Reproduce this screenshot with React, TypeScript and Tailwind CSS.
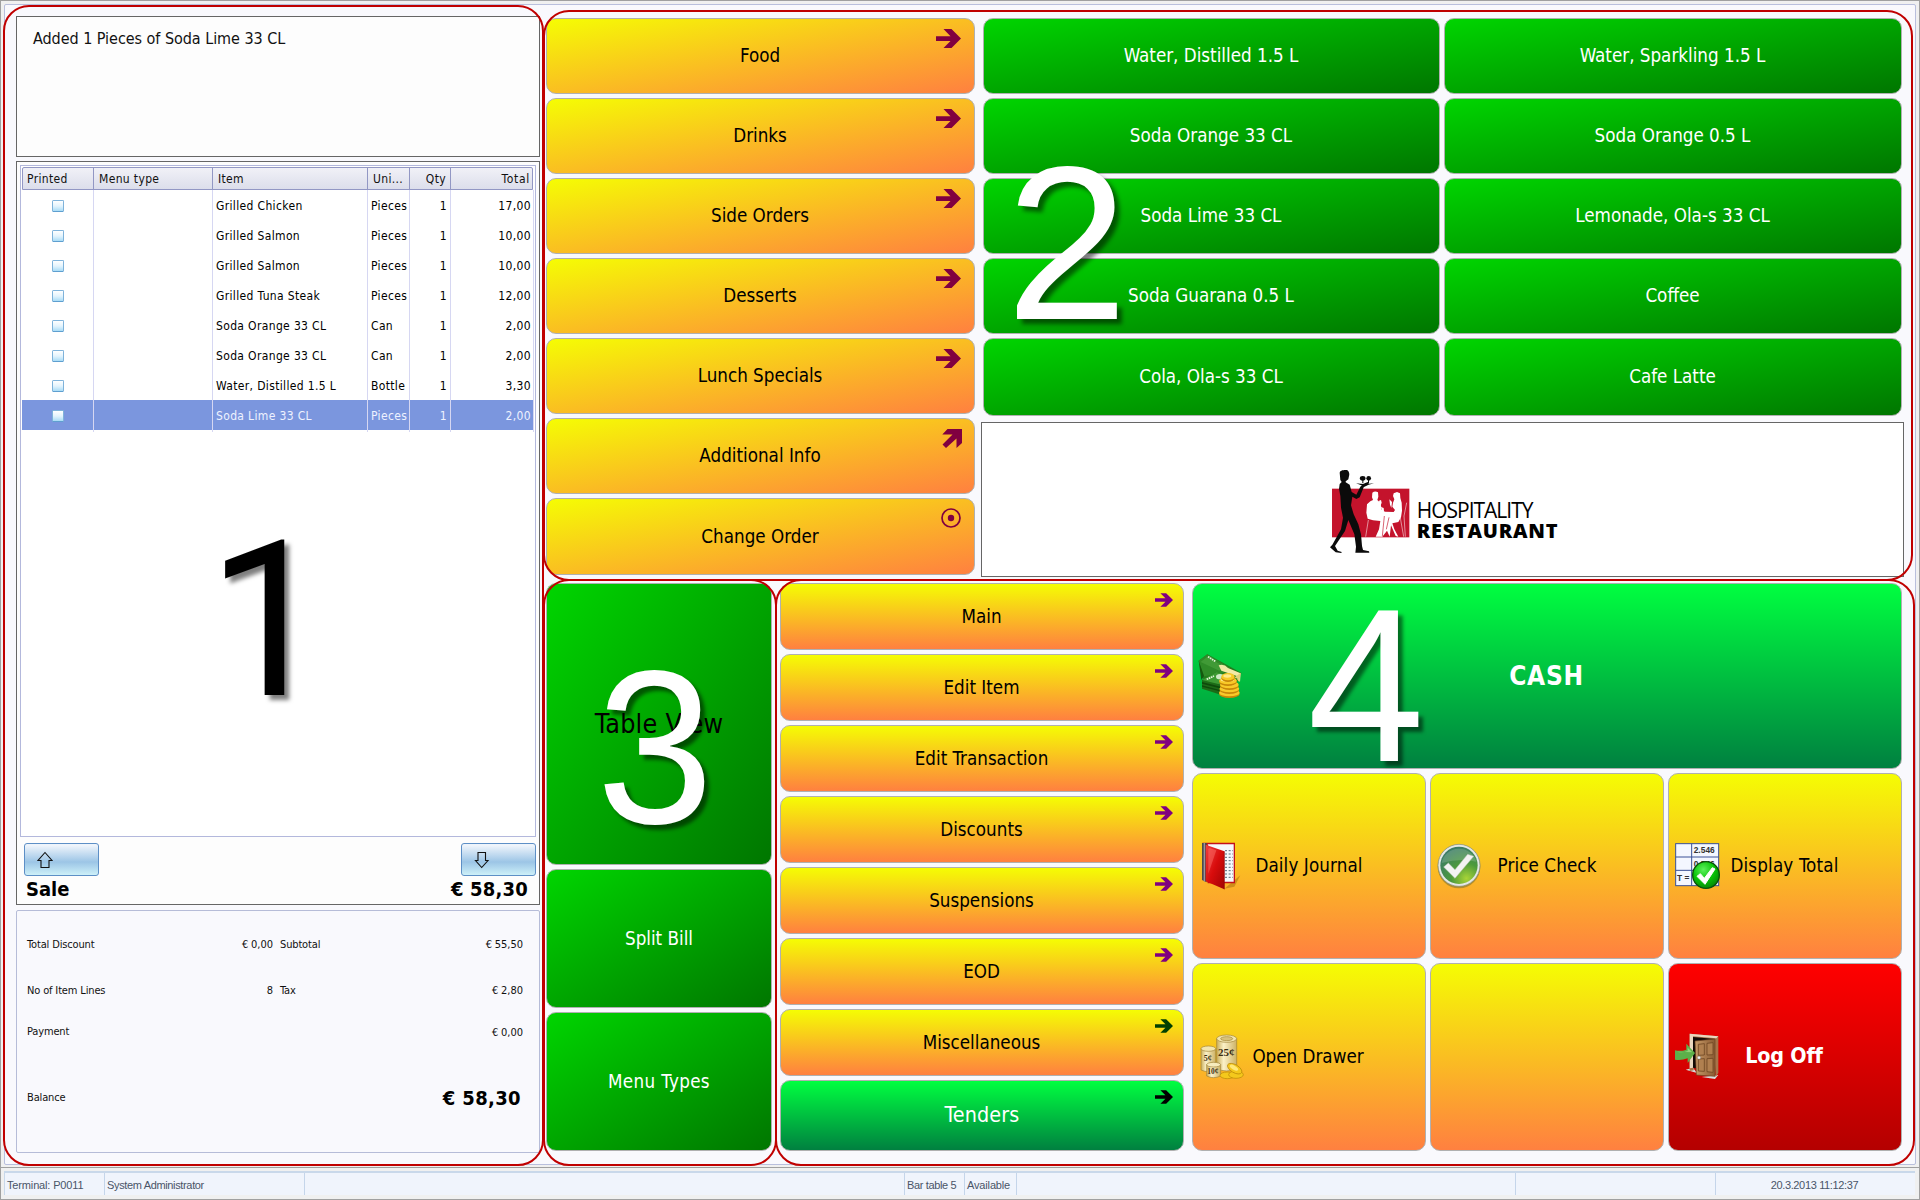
import type { ReactNode } from "react";

type Line = { item: string; unit: string; total: string; selected?: boolean };

const LINES: Line[] = [
  { item: "Grilled Chicken", unit: "Pieces", total: "17,00" },
  { item: "Grilled Salmon", unit: "Pieces", total: "10,00" },
  { item: "Grilled Salmon", unit: "Pieces", total: "10,00" },
  { item: "Grilled Tuna Steak", unit: "Pieces", total: "12,00" },
  { item: "Soda Orange 33 CL", unit: "Can", total: "2,00" },
  { item: "Soda Orange 33 CL", unit: "Can", total: "2,00" },
  { item: "Water, Distilled 1.5 L", unit: "Bottle", total: "3,30" },
  { item: "Soda Lime 33 CL", unit: "Pieces", total: "2,00", selected: true },
];

const CATEGORIES = ["Food", "Drinks", "Side Orders", "Desserts", "Lunch Specials", "Additional Info", "Change Order"];

const PRODUCTS = [
  "Water, Distilled 1.5 L",
  "Water, Sparkling 1.5 L",
  "Soda Orange 33 CL",
  "Soda Orange 0.5 L",
  "Soda Lime 33 CL",
  "Lemonade, Ola-s 33 CL",
  "Soda Guarana 0.5 L",
  "Coffee",
  "Cola, Ola-s 33 CL",
  "Cafe Latte",
];

const MENUS = ["Main", "Edit Item", "Edit Transaction", "Discounts", "Suspensions", "EOD", "Miscellaneous"];

const TILE = "relative flex items-center justify-center rounded-[10px] border border-[#b0b0b0] text-[18.67px] leading-none";
const AMBER_DIAGONAL = "bg-linear-to-br/srgb from-[#f5fd03] to-[#ff8040] text-black";
const AMBER = "bg-linear-to-b/srgb from-[#f5fd03] to-[#ff8040] text-black";
const GREEN = "bg-linear-to-br/srgb from-[#00d500] to-[#007600] text-white";
const BRIGHT = "bg-linear-to-b/srgb from-[#00ff40] to-[#008040] text-white";
const RED = "bg-linear-to-b/srgb from-[#ff0000] to-[#b40000] text-white";

function Tile({ look, className = "", children }: { look: string; className?: string; children?: ReactNode }) {
  return <button className={`${TILE} ${look} ${className}`}>{children}</button>;
}

function ArrowRight({ className }: { className: string }) {
  return (
    <svg viewBox="0 0 25 19" className={className} fill="currentColor">
      <path d="M7.5 0h8L25 9.5 15.5 19h-8l7-7H0V7.2h14.5z" />
    </svg>
  );
}

function CategoryMark({ name }: { name: string }) {
  if (name === "Additional Info")
    return (
      <svg viewBox="0 0 20 19" className="absolute top-[10px] right-[12px] h-[19px] w-[20px] text-[#800040]" fill="currentColor">
        <path d="M5.5 0H20v14l-5.5 5V9.5L4 19 .5 15.5l10-10H.3z" />
      </svg>
    );
  if (name === "Change Order")
    return (
      <svg viewBox="0 0 20 20" className="absolute top-[9px] right-[13px] h-5 w-5 text-[#800040]" fill="none">
        <circle cx="10" cy="10" r="9" stroke="currentColor" strokeWidth="1.7" />
        <circle cx="10" cy="10" r="3.2" fill="currentColor" />
      </svg>
    );
  return <ArrowRight className="absolute top-[10px] right-[13px] h-[19px] w-[25px] text-[#800040]" />;
}

function Checkbox() {
  return (
    <span className="block h-3 w-[12px] rounded-[1.5px] border border-[#7fb3da] border-b-[#5f9fd0] bg-linear-to-b from-white via-[#e4f4fd] via-50% to-[#a9dcf6]" />
  );
}

function ListPanel() {
  const cols = "grid grid-cols-[71px_119px_155px_42px_41px_83px]";
  return (
    <section className="mt-[4px] flex h-[744px] flex-col border border-[#666] bg-[#fdfdfd] px-[3px] pt-[3px]">
      <div className="h-[672px] border border-[#b3b8dc] bg-white px-px pt-px">
        <div
          className={`${cols} h-[23px] w-[511px] rounded-t-[2px] border border-[#9297c4] bg-linear-to-b from-[#f1f1f7] to-[#dcdeeb] text-[12px] leading-[22px] tracking-[0.35px] text-[#111]`}
        >
          <span className="border-r border-[#9297c4] pl-[4px]">Printed</span>
          <span className="border-r border-[#9297c4] pl-[5px]">Menu type</span>
          <span className="border-r border-[#9297c4] pl-[5px]">Item</span>
          <span className="border-r border-[#9297c4] pl-[5px]">Uni...</span>
          <span className="border-r border-[#9297c4] pr-[4px] text-right">Qty</span>
          <span className="pr-[4px] text-right tracking-[0.7px]">Total</span>
        </div>
        {LINES.map((line, i) => (
          <div
            key={i}
            className={`${cols} h-[30px] w-[511px] pl-px text-[12px] leading-[32px] tracking-[0.35px] ${line.selected ? "bg-[#7b96de] text-[#eef2ff]" : "text-black"}`}
          >
            <span className="flex items-center justify-center border-r border-[#d6d7f2]">
              <Checkbox />
            </span>
            <span className="border-r border-[#d6d7f2]" />
            <span className="border-r border-[#d6d7f2] pl-[3px] whitespace-nowrap">{line.item}</span>
            <span className="overflow-hidden border-r border-[#d6d7f2] pl-[3px] whitespace-nowrap">{line.unit}</span>
            <span className="border-r border-[#d6d7f2] pr-[3px] text-right">1</span>
            <span className="border-r border-[#d6d7f2] pr-[2px] text-right">{line.total}</span>
          </div>
        ))}
      </div>
      <div className="mt-[6px] flex justify-between pl-[4px]">
        <ScrollButton up />
        <ScrollButton />
      </div>
      <div className="mt-[2px] flex justify-between pr-[8px] pl-[6px] text-[20px] leading-[23px] font-bold text-black">
        <span>Sale</span>
        <span className="tracking-[0.2px]">€ 58,30</span>
      </div>
    </section>
  );
}

function ScrollButton({ up = false }: { up?: boolean }) {
  return (
    <button className="flex h-[33px] w-[75px] items-center rounded-[3px] border border-[#5d8fc6] bg-linear-to-b from-[#eef4fb] from-5% via-[#9cc5e6] via-58% to-[#cdf0f8] pl-[12px]">
      <svg viewBox="0 0 16 18" className="h-[18px] w-4" fill="none" stroke="#111" strokeWidth="1.1">
        {up ? <path d="M8 1.5 15 9.5h-3v7H4v-7H1z" /> : <path d="M4 1.5h7.5v8H14L7.7 16.5 1.5 9.5H4z" />}
      </svg>
    </button>
  );
}

function Totals() {
  return (
    <section className="mt-[5px] h-[243px] rounded-[2px] border border-[#b6bcd8] bg-[#f9f9fd] pr-[16px] pl-[10px] text-[11px] tracking-[-0.15px] text-[#111]">
      <div className="grid grid-cols-[246px_1fr] gap-x-[7px]">
        <Amount label="Total Discount" value="€ 0,00" className="pt-[27px]" />
        <Amount label="Subtotal" value="€ 55,50" className="pt-[27px]" />
        <Amount label="No of Item Lines" value="8" className="pt-[32px]" />
        <Amount label="Tax" value="€ 2,80" className="pt-[32px]" />
        <Amount label="Payment" value="" className="pt-[27px]" />
        <Amount label="" value="€ 0,00" className="pt-[28px]" />
      </div>
      <div className="mt-[42px] flex items-center justify-between pr-[2px]">
        <span>Balance</span>
        <span className="text-[20px] leading-[32px] font-bold tracking-[0.35px] text-black">€ 58,30</span>
      </div>
    </section>
  );
}

function Amount({ label, value, className }: { label: string; value: string; className: string }) {
  return (
    <div className={`flex justify-between leading-[14px] whitespace-nowrap ${className}`}>
      <span>{label}</span>
      <span className="tracking-[0px] [word-spacing:-0.5px]">{value}</span>
    </div>
  );
}

function WaiterLogo() {
  return (
    <svg viewBox="50 50 260 270" className="h-[90px] w-[86.7px] shrink-0">
      <rect x="65" y="118" width="232" height="146" fill="#c4132c" />
      <g fill="#fff">
        <path d="M186 130Q194 124 203 129L204 142 201 152 210 160 214 182 224 187 250 188 254 182 246 172 248 160 252 150 248 140 250 132 260 128 269 132 270 146 274 160 275 184 272 204 264 218 246 222 252 240 264 262 256 260 242 228 238 262 230 244 216 262 196 262 206 240 210 215 188 213 172 208 168 190 170 165 180 156 188 152 185 144z" />
        <path d="M206 154l6-2 2 8-3 8 4 10-6-2-2-12zM214 174l6 2 1 10-8 2zM237 150l8 8-2 18-4-10z" />
        <path d="M174 212l-8 50M289 160l-8 40 4 62M270 206l10 56" fill="none" stroke="#fff" strokeWidth="1.6" />
      </g>
      <path d="M222 200l-6 60M236 204l-8 36" stroke="#c4132c" strokeWidth="2" />
      <g fill="#0b0b0b">
        <path d="M88 70C90 62 100 62 110 62 116 66 118 72 116 80L114 90 106 96 106 99 118 106 124 128 138 136 150 112 158 104 172 98 176 102 166 110 160 114 148 144 138 149 126 142 122 168 130 195 144 225 152 255 155 290 158 302 176 306 177 310 135 310 137 292 132 255 114 212 104 245 74 290 82 304 94 308 93 311 76 309 59 294 66 286 92 240 98 205 92 175 90 140 86 118 88 104 94 98 90 92z" />
        <path d="M137 102q26 4 54 0l-16 4-10 5-14-4z" />
        <ellipse cx="157" cy="87" rx="8.5" ry="7" />
        <ellipse cx="175" cy="87" rx="7" ry="7" />
        <path d="M156 92h3v9h-3zM173 92h3v9h-3z" />
      </g>
    </svg>
  );
}

function CashIcon() {
  return (
    <svg viewBox="0 0 132 132" className="absolute left-[5px] h-11 w-11">
      <path d="M2 20 28 1l70 38 32 18-8 24-44 10-60-8z" fill="#237a1c" />
      <path d="M2 20 28 1l68 40-20 16-58 10z" fill="#2f8a28" />
      <path d="M8 24 28 8l54 32-18 10z" fill="#4da53f" opacity=".6" />
      <path d="M2 20l16 46-8 12z" fill="#14580f" />
      <path d="M30 8l22 14" stroke="#e9f6e0" strokeWidth="5" strokeDasharray="5 2" />
      <path d="M62 34q16-6 28 8l38 16-2 26-10-18-46-16z" fill="#f2e9a6" />
      <path d="M128 56l-4 28-14-14z" fill="#dfd27a" />
      <path d="M12 78l44-24 62 20-4 36-46 12-56-18z" fill="#1c6b17" />
      <path d="M12 78l44-24 62 20-42 20z" fill="#3d9a34" />
      <path d="M12 84l62 16v5L12 89zM12 94l62 16v4L12 98z" fill="#0e4a0b" />
      <ellipse cx="66" cy="68" rx="12" ry="8" fill="#cfe9c6" />
      <path d="M26 76l22-10" stroke="#e9f6e0" strokeWidth="5" strokeDasharray="5 2" />
      {[0, 1, 2, 3, 4].map((i) => (
        <g key={i}>
          <ellipse cx={i > 2 ? 90 : 94} cy={120 - i * 12} rx={i > 3 ? 20 : 31 - i * 1.5} ry="12" fill="#c98707" />
          <ellipse cx={i > 2 ? 90 : 94} cy={116 - i * 12} rx={i > 3 ? 20 : 31 - i * 1.5} ry="11" fill="#f8c928" />
          <ellipse cx={i > 2 ? 88 : 91} cy={114 - i * 12} rx={i > 3 ? 12 : 20} ry="5" fill="#ffe98a" />
        </g>
      ))}
    </svg>
  );
}

function JournalIcon() {
  return (
    <svg viewBox="0 0 120 144" className="absolute left-[8px] h-12 w-10">
      <defs>
        <linearGradient id="cover" x1="0" y1="0" x2="1" y2="1">
          <stop offset="0" stopColor="#f04040" />
          <stop offset=".5" stopColor="#d80c0c" />
          <stop offset="1" stopColor="#a00404" />
        </linearGradient>
      </defs>
      <path d="M70 140l48-40-18 34z" fill="#7a4a00" opacity=".35" />
      <path d="M4 2h98v122H20z" fill="#c5101a" />
      <path d="M20 7h78v112H60z" fill="#f6f9fb" />
      {[26, 36, 46, 56, 66, 76, 86, 96, 106].map((y) => (
        <path key={y} d={`M72 ${y}h24`} stroke="#3d5568" strokeWidth="2.6" strokeDasharray="6 5" />
      ))}
      <path d="M3 3h14v118L3 114z" fill="#4a4a4e" />
      <path d="M8 3h4v116l-4-2z" fill="#96969c" />
      <path d="M14 8l56 20v114L14 118z" fill="url(#cover)" />
      <path d="M26 18l20 7-24 70V20z" fill="#ff7a70" opacity=".45" />
      <path d="M70 28v114" stroke="#8c0505" strokeWidth="2" />
    </svg>
  );
}

function PriceCheckIcon() {
  return (
    <svg viewBox="0 0 132 138" className="absolute left-[6px] h-[46px] w-11">
      <defs>
        <radialGradient id="dial" cx=".7" cy=".85" r=".9">
          <stop offset="0" stopColor="#a8d437" />
          <stop offset=".45" stopColor="#4c9a3c" />
          <stop offset="1" stopColor="#3b7a68" />
        </radialGradient>
      </defs>
      <ellipse cx="66" cy="71" rx="64" ry="65" fill="#6b6a30" opacity=".5" />
      <circle cx="66" cy="67" r="63" fill="#e4e8e4" stroke="#7d8a80" strokeWidth="2" />
      <circle cx="66" cy="67" r="56" fill="url(#dial)" />
      <path d="M14 60a53 50 0 0 1 104-4Q70 44 14 60z" fill="#fff" opacity=".16" />
      <path d="M20 72l14-12 20 20 38-46 18 6-56 66z" fill="#f3f3f3" stroke="#b9c4b9" strokeWidth="1.5" />
    </svg>
  );
}

function DisplayTotalIcon() {
  return (
    <svg viewBox="0 0 135 138" className="absolute left-[6px] h-[46px] w-[45px]">
      <defs>
        <radialGradient id="ok" cx=".4" cy=".3" r=".8">
          <stop offset="0" stopColor="#5cf05c" />
          <stop offset=".5" stopColor="#08c408" />
          <stop offset="1" stopColor="#057a05" />
        </radialGradient>
      </defs>
      <rect x="2" y="2" width="129" height="126" fill="#f4f7ff" stroke="#3a5096" strokeWidth="3" />
      <path d="M2 42h129M2 82h129M50 2v126" stroke="#3a5096" strokeWidth="3" />
      <g fontFamily="Liberation Sans, sans-serif" fontWeight="bold" fontSize="25" fill="#333">
        <text x="56" y="31">2.546</text>
        <text x="56" y="71">0.546</text>
        <text x="6" y="114">T =</text>
      </g>
      <circle cx="93" cy="96" r="40" fill="url(#ok)" stroke="#0a5208" strokeWidth="4" />
      <path d="M66 100l10-8 12 14 24-32 8 4-30 46z" fill="#fff" stroke="#fff" strokeWidth="3" />
    </svg>
  );
}

function CoinsIcon() {
  return (
    <svg viewBox="0 0 132 138" className="absolute left-[7px] h-[46px] w-11">
      <defs>
        <linearGradient id="roll">
          <stop offset="0" stopColor="#c9ae5c" />
          <stop offset=".35" stopColor="#fbf1c8" />
          <stop offset="1" stopColor="#cdb266" />
        </linearGradient>
      </defs>
      <g stroke="#a08438" strokeWidth="2">
        <path d="M50 14v90q30 14 60 0V14z" fill="url(#roll)" />
        <ellipse cx="80" cy="14" rx="30" ry="11" fill="#f3e6b0" />
        <ellipse cx="80" cy="14" rx="18" ry="6" fill="#d9c27a" />
        <path d="M3 44v64q22 10 44 0V44z" fill="url(#roll)" />
        <ellipse cx="25" cy="44" rx="22" ry="8" fill="#f3e6b0" />
        <path d="M20 92v34q20 10 42 0V92z" fill="url(#roll)" />
        <ellipse cx="41" cy="92" rx="21" ry="7" fill="#f7ecbd" />
      </g>
      <g fontFamily="Liberation Serif, serif" fontWeight="bold" fill="#3a2e12">
        <text x="54" y="65" fontSize="33">25¢</text>
        <text x="11" y="82" fontSize="24">5¢</text>
        <text x="22" y="120" fontSize="22">10¢</text>
      </g>
      <g fill="#f4c81c" stroke="#b88606" strokeWidth="2">
        <ellipse cx="82" cy="124" rx="22" ry="10" />
        <ellipse cx="108" cy="122" rx="22" ry="11" />
        <ellipse cx="104" cy="104" rx="24" ry="12" transform="rotate(30 104 104)" />
        <ellipse cx="102" cy="101" rx="14" ry="6" transform="rotate(30 102 101)" fill="#ffe878" stroke="none" />
      </g>
    </svg>
  );
}

function DoorIcon() {
  return (
    <svg viewBox="0 0 135 138" className="absolute left-[6px] h-[46px] w-[45px]">
      <defs>
        <linearGradient id="wood">
          <stop offset="0" stopColor="#c79b68" />
          <stop offset="1" stopColor="#8a5a32" />
        </linearGradient>
      </defs>
      <path d="M32 110l22-6 12 16zM80 132l50-6-10 12z" fill="#d8dcdc" />
      <path d="M44 2l86 8v110l-8 12-6-110-60-6v96l-12 2z" fill="#a87448" />
      <path d="M44 2l86 8-6 6-70-6v94l-10 2z" fill="#ead7bf" />
      <path d="M54 12l66 6v10H64v78l-10-2z" fill="#120a06" />
      <path d="M60 24l60-6v112l-56-4z" fill="url(#wood)" stroke="#6b4020" strokeWidth="2" />
      <g fill="#b08050" stroke="#704724" strokeWidth="2.5">
        <path d="M70 34l18-2v34l-18 1zM96 31l18-2v36l-18 1zM70 78l18-1v38l-18-1zM96 77l18-1v42l-18-2z" />
      </g>
      <circle cx="72" cy="74" r="5" fill="#f0f0f0" stroke="#555" />
      <path d="M0 52q16 4 34-2V32l26 28-22 30V76q-20 8-38 4z" fill="#5cb04a" />
      <path d="M6 56q16 4 32-2V44l14 14z" fill="#a6e08c" opacity=".7" />
    </svg>
  );
}

function Callout({ className, children }: { className: string; children: ReactNode }) {
  return (
    <span className={`pointer-events-none absolute leading-none [text-shadow:5px_5px_4px_rgba(0,0,0,0.5)] ${className}`}>
      {children}
    </span>
  );
}

function StatusBar() {
  const cell = "border-r border-[#c5d5ea] pl-[2px] whitespace-nowrap";
  return (
    <footer className="mt-[3px] ml-[3px] flex h-[24px] w-[1911px] border-t-2 border-l border-[#c9d8ea] bg-[#f0f4fc] font-['Liberation_Sans',sans-serif] text-[11px] leading-[24px] tracking-[-0.35px] text-[#4a5568]">
      <span className={`${cell} w-[100px] tracking-[-0.15px]`}>Terminal: P0011</span>
      <span className={`${cell} w-[200px]`}>System Administrator</span>
      <span className={`${cell} w-[600px]`} />
      <span className={`${cell} w-[60px]`}>Bar table 5</span>
      <span className={`${cell} w-[52px] tracking-[-0.15px]`}>Available</span>
      <span className={`${cell} w-[499px]`} />
      <span className={`${cell} w-[200px]`} />
      <span className="flex-1 pr-[2px] text-center">20.3.2013 11:12:37</span>
    </footer>
  );
}

export default function App() {
  return (
    <div className="relative h-[1200px] w-[1920px] overflow-hidden border border-[#a0a0a0] bg-[#f0f0f0] font-['DejaVu_Sans_Condensed','DejaVu_Sans',sans-serif]">
      <main className="mt-[3px] ml-[3px] flex h-[1161px] w-[1912px] rounded-[2px] border border-[#b9bfdd] bg-[#f9f9fd]">
        <div className="mt-[11px] ml-[11px] w-[524px]">
          <section className="h-[141px] border border-[#666] bg-[#fdfdfd] pt-[11px] pl-[16px] text-[16px] leading-[22px] tracking-[-0.04px] text-[#111]">
            Added 1 Pieces of Soda Lime 33 CL
          </section>
          <ListPanel />
          <Totals />
        </div>

        <div className="mt-[13px] ml-[6px] w-[1358px]">
          <div className="flex h-[565px]">
            <nav className="flex w-[429px] flex-col gap-1">
              {CATEGORIES.map((name) => (
                <Tile key={name} look={AMBER_DIAGONAL} className={name === "Change Order" ? "h-[77px] pt-px pr-px" : "h-[76px] pr-px"}>
                  {name}
                  <CategoryMark name={name} />
                </Tile>
              ))}
            </nav>
            <div className="ml-[6px] w-[923px]">
              <div className="grid grid-cols-[457px_458px] grid-rows-[76px_76px_76px_76px_78px] gap-1 px-[2px]">
                {PRODUCTS.map((name) => (
                  <Tile key={name} look={GREEN} className="pr-px">
                    {name}
                  </Tile>
                ))}
              </div>
              <div className="mt-[6px] flex h-[155px] border border-[#666] bg-white pt-[43px] pl-[345px]">
                <WaiterLogo />
                <div className="ml-[3px] pt-[31px] font-['Open_Sans',sans-serif] text-black">
                  <div className="text-[21px] leading-[26px] tracking-[-1px]">HOSPITALITY</div>
                  <div className="text-[20px] leading-[16px] font-extrabold tracking-[0.75px]">RESTAURANT</div>
                </div>
              </div>
            </div>
          </div>

          <div className="flex h-[568px]">
            <div className="flex w-[226px] flex-col">
              <Tile look={GREEN} className="h-[282px]">
                <span className="text-[26.67px] tracking-[0.25px] text-black">Table View</span>
              </Tile>
              <Tile look={GREEN} className="mt-[4px] h-[139px] pt-[2px]">
                Split Bill
              </Tile>
              <Tile look={GREEN} className="mt-[4px] h-[139px] pt-[2px] tracking-[0.35px]">
                Menu Types
              </Tile>
            </div>
            <nav className="ml-[8px] flex w-[404px] flex-col gap-1">
              {MENUS.map((name) => (
                <Tile key={name} look={AMBER} className="h-[67px] pt-[2px] pr-px">
                  {name}
                  <ArrowRight
                    className={`absolute top-[9px] right-[10px] h-[14px] w-[18px] ${name === "Miscellaneous" ? "text-[#004000]" : "text-[#800080]"}`}
                  />
                </Tile>
              ))}
              <Tile look={BRIGHT} className="h-[71px] pb-[2px]">
                <span className="text-[21.33px] tracking-[0.15px]">Tenders</span>
                <ArrowRight className="absolute top-[9px] right-[10px] h-[14px] w-[18px] text-black" />
              </Tile>
            </nav>
            <div className="ml-[8px] grid w-[710px] grid-cols-3 grid-rows-[186px_186px_188px] gap-1">
              <Tile look={BRIGHT} className="col-span-3 pr-px">
                <CashIcon />
                <span className="text-[26px] font-bold tracking-[0.7px]">CASH</span>
              </Tile>
              <Tile look={AMBER} className="tracking-[0.1px]">
                <JournalIcon />
                Daily Journal
              </Tile>
              <Tile look={AMBER} className="tracking-[0.1px]">
                <PriceCheckIcon />
                Price Check
              </Tile>
              <Tile look={AMBER} className="pr-px tracking-[0.15px]">
                <DisplayTotalIcon />
                Display Total
              </Tile>
              <Tile look={AMBER} className="pr-[2px]">
                <CoinsIcon />
                Open Drawer
              </Tile>
              <Tile look={AMBER} />
              <Tile look={RED} className="pr-[2px] pb-[2px]">
                <DoorIcon />
                <span className="text-[21.33px] font-bold tracking-[-0.2px]">Log Off</span>
              </Tile>
            </div>
          </div>
        </div>
      </main>
      <div className="mt-[2px] h-px bg-[#a0a0a0]" />
      <StatusBar />

      <div className="pointer-events-none absolute top-[4px] left-[2px] h-[1161px] w-[541px] rounded-[26px] border-2 border-[#c00000]" />
      <div className="pointer-events-none absolute top-[9px] left-[542px] h-[571px] w-[1370px] rounded-[26px] border-2 border-[#c00000]" />
      <div className="pointer-events-none absolute top-[578px] left-[542px] h-[587px] w-[234px] rounded-[26px] border-2 border-[#c00000]" />
      <div className="pointer-events-none absolute top-[578px] left-[774px] h-[587px] w-[1140px] rounded-[26px] border-2 border-[#c00000]" />

      <Callout className="top-[512px] left-[206px] font-['Roboto',sans-serif] text-[217px] text-black">1</Callout>
      <Callout className="top-[133px] left-[1005px] font-['Liberation_Sans',sans-serif] text-[219px] text-white">2</Callout>
      <Callout className="top-[637px] left-[593px] origin-center scale-x-96 font-['Liberation_Sans',sans-serif] text-[219px] text-white">3</Callout>
      <Callout className="top-[575px] left-[1304px] origin-center scale-x-96 font-['Liberation_Sans',sans-serif] text-[219px] text-white">4</Callout>
    </div>
  );
}
